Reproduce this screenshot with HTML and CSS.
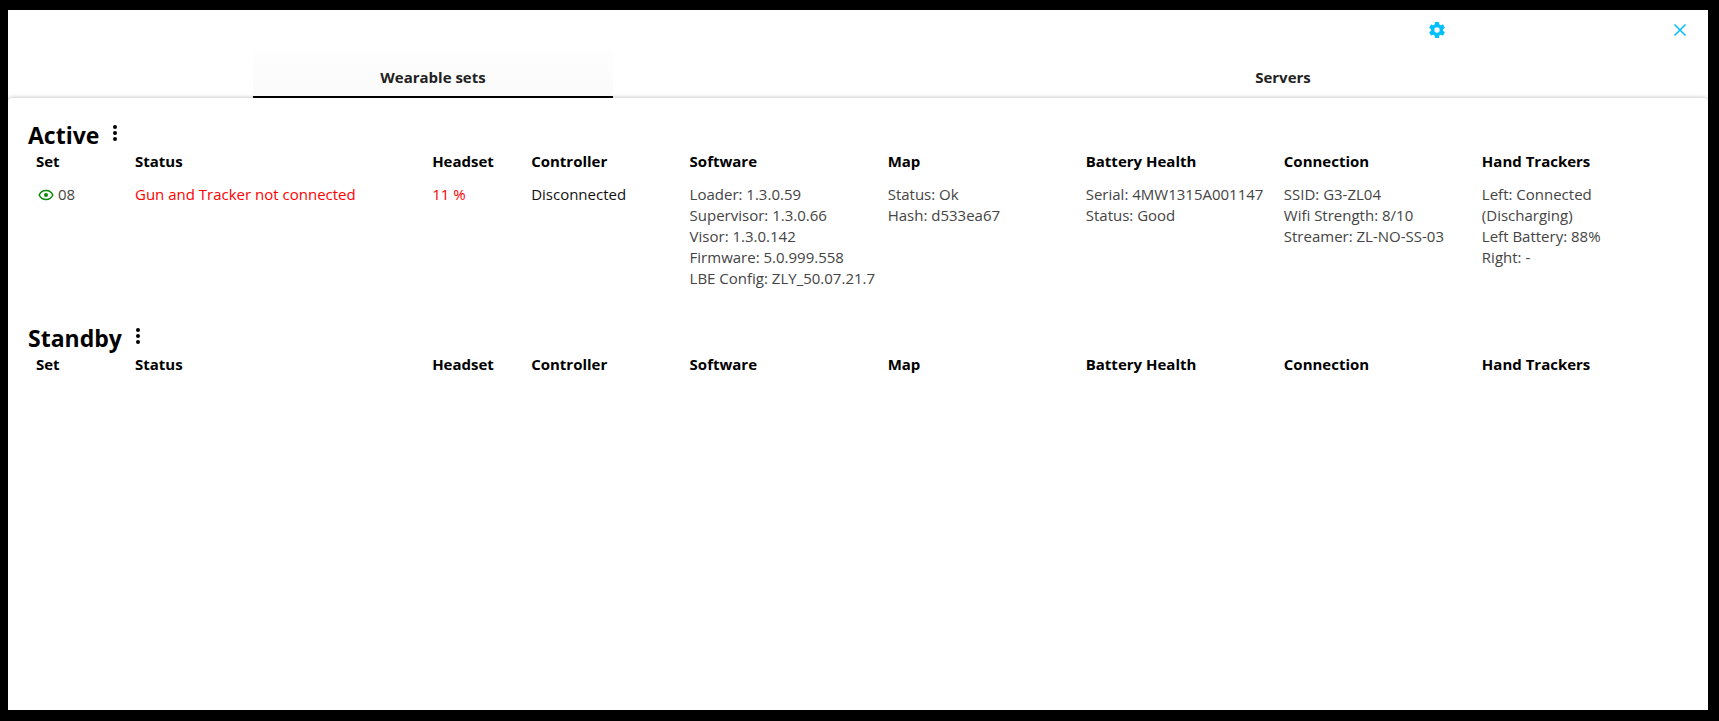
FILE: index.html
```
<!DOCTYPE html>
<html lang="en">
<head>
  <meta charset="UTF-8">
  <title>Wearable sets</title>
  <link rel="stylesheet" href="styles.css">
</head>
<body>

  <div class="window">
    <header class="topbar">
      <button class="icon-btn settings" type="button" aria-label="Settings">
        <svg width="20" height="20" viewBox="0 0 24 24" fill="currentColor"><path d="M19.14 12.94c.04-.3.06-.61.06-.94 0-.32-.02-.64-.07-.94l2.03-1.58a.49.49 0 0 0 .12-.61l-1.92-3.32a.488.488 0 0 0-.59-.22l-2.39.96c-.5-.38-1.03-.7-1.62-.94l-.36-2.54a.484.484 0 0 0-.48-.41h-3.84c-.24 0-.43.17-.47.41l-.36 2.54c-.59.24-1.13.57-1.62.94l-2.39-.96c-.22-.08-.47 0-.59.22L2.74 8.87c-.12.21-.08.47.12.61l2.03 1.58c-.05.3-.09.63-.09.94s.02.64.07.94l-2.03 1.58a.49.49 0 0 0-.12.61l1.92 3.32c.12.22.37.29.59.22l2.39-.96c.5.38 1.03.7 1.62.94l.36 2.54c.05.24.24.41.48.41h3.84c.24 0 .44-.17.47-.41l.36-2.54c.59-.24 1.13-.56 1.62-.94l2.39.96c.22.08.47 0 .59-.22l1.92-3.32c.12-.22.07-.47-.12-.61l-2.01-1.58zM12 15.2A3.2 3.2 0 1 1 12 8.800a3.200 3.200 0 0 1 0 6.400z"/></svg>
      </button>
      <button class="icon-btn" type="button" aria-label="Close">
        <svg width="20" height="20" viewBox="0 0 20 20" fill="none" stroke="currentColor" stroke-width="1.500"><path d="M4.500 4.500l11 11M15.500 4.500l-11 11"/></svg>
      </button>
    </header>

    <nav class="tabs">
      <button class="tab active" type="button">Wearable sets</button>
      <button class="tab" type="button">Servers</button>
    </nav>

    <main class="panel">
      <section class="group active-group">
        <div class="group-head">
          <h2>Active</h2>
          <button class="menu-btn" type="button" aria-label="Active menu">
            <svg width="6" height="18" viewBox="0 0 6 18"><circle cx="3" cy="3" r="2"/><circle cx="3" cy="9" r="2"/><circle cx="3" cy="15" r="2"/></svg>
          </button>
        </div>
        <table>
          <thead>
            <tr>
              <th class="narrow">Set</th>
              <th class="status">Status</th>
              <th class="narrow">Headset</th>
              <th class="controller">Controller</th>
              <th>Software</th>
              <th>Map</th>
              <th>Battery Health</th>
              <th>Connection</th>
              <th>Hand Trackers</th>
            </tr>
          </thead>
          <tbody>
            <tr>
              <td>
                <div class="set">
                  <svg width="16" height="12" viewBox="0 0 16 12" fill="none" stroke="currentColor" stroke-width="1.500"><path d="M1.200 6C2.500 3 5 1.500 8 1.500S13.500 3 14.800 6C13.500 9 11 10.500 8 10.500S2.500 9 1.200 6z"/><circle cx="8" cy="6" r="2" fill="currentColor" stroke="none"/></svg>
                  <span>08</span>
                </div>
              </td>
              <td class="error">Gun and Tracker not connected</td>
              <td class="error">11 %</td>
              <td class="off">Disconnected</td>
              <td>Loader: 1.3.0.59<br>Supervisor: 1.3.0.66<br>Visor: 1.3.0.142<br>Firmware: 5.0.999.558<br>LBE Config: ZLY_50.07.21.7</td>
              <td>Status: Ok<br>Hash: d533ea67</td>
              <td>Serial: 4MW1315A001147<br>Status: Good</td>
              <td>SSID: G3-ZL04<br>Wifi Strength: 8/10<br>Streamer: ZL-NO-SS-03</td>
              <td>Left: Connected<br>(Discharging)<br>Left Battery: 88%<br>Right: -</td>
            </tr>
          </tbody>
        </table>
      </section>

      <section class="group">
        <div class="group-head">
          <h2>Standby</h2>
          <button class="menu-btn" type="button" aria-label="Standby menu">
            <svg width="6" height="18" viewBox="0 0 6 18"><circle cx="3" cy="3" r="2"/><circle cx="3" cy="9" r="2"/><circle cx="3" cy="15" r="2"/></svg>
          </button>
        </div>
        <table>
          <thead>
            <tr>
              <th class="narrow">Set</th>
              <th class="status">Status</th>
              <th class="narrow">Headset</th>
              <th class="controller">Controller</th>
              <th>Software</th>
              <th>Map</th>
              <th>Battery Health</th>
              <th>Connection</th>
              <th>Hand Trackers</th>
            </tr>
          </thead>
        </table>
      </section>
    </main>
  </div>

</body>
</html>
```

FILE: styles.css
```
* { box-sizing: border-box; }
body {
  margin: 0;
  padding: 10px 11px 11px 8px;
  height: 100vh;
  background: #000;
  font-family: "Open Sans", "Noto Sans", sans-serif;
  font-size: 15px;
  color: #000;
}
button {
  border: 0;
  padding: 0;
  background: none;
  font: inherit;
  cursor: pointer;
}
svg { display: block; }
.window {
  display: flex;
  flex-direction: column;
  height: 100%;
  background: #fff;
  overflow: hidden;
}

/* top bar */
.topbar {
  display: grid;
  grid-template-columns: repeat(7, 1fr);
  justify-items: end;
  align-items: center;
  height: 40px;
}
.icon-btn { color: #00bfff; padding-right: 18px; }
.settings { grid-column: 6; }

/* tabs */
.tabs {
  position: relative;
  z-index: 1;
  display: grid;
  grid-template-columns: 1fr 1fr;
  justify-items: center;
  height: 48px;
}
.tab {
  width: 360px;
  padding-top: 8px;
  border-bottom: 2px solid transparent;
  font-weight: bold;
  color: #222;
}
.tab.active {
  background: linear-gradient(#fefefe, #fafafa);
  border-bottom-color: #000;
}

/* content */
.panel {
  flex: 1;
  padding: 20px 36px 0 20px;
  background: #fff;
  border-radius: 4px 4px 0 0;
  box-shadow: 0 0 4px rgba(0,0,0,0.3);
}
.active-group { margin-bottom: 32px; }
.group-head {
  display: flex;
  align-items: center;
  gap: 13px;
  height: 33px;
}
h2 { margin: 0; font-size: 23px; line-height: 34px; }
.menu-btn { padding-bottom: 3px; }
table {
  width: 100%;
  table-layout: fixed;
  border-collapse: collapse;
}
th, td {
  padding: 0 0 0 8px;
  text-align: left;
  vertical-align: top;
  line-height: 21px;
  white-space: nowrap;
}
th { width: 12%; }
th.narrow { width: 6%; }
th.status { width: 18%; }
th.controller { width: 9.6%; }
td { padding-top: 12px; color: #444; }
.error { color: #f00; }
.off { color: #111; }
.set {
  display: flex;
  align-items: center;
  gap: 4px;
  padding-left: 2px;
}
.set svg { color: #0a8a0a; }
```
